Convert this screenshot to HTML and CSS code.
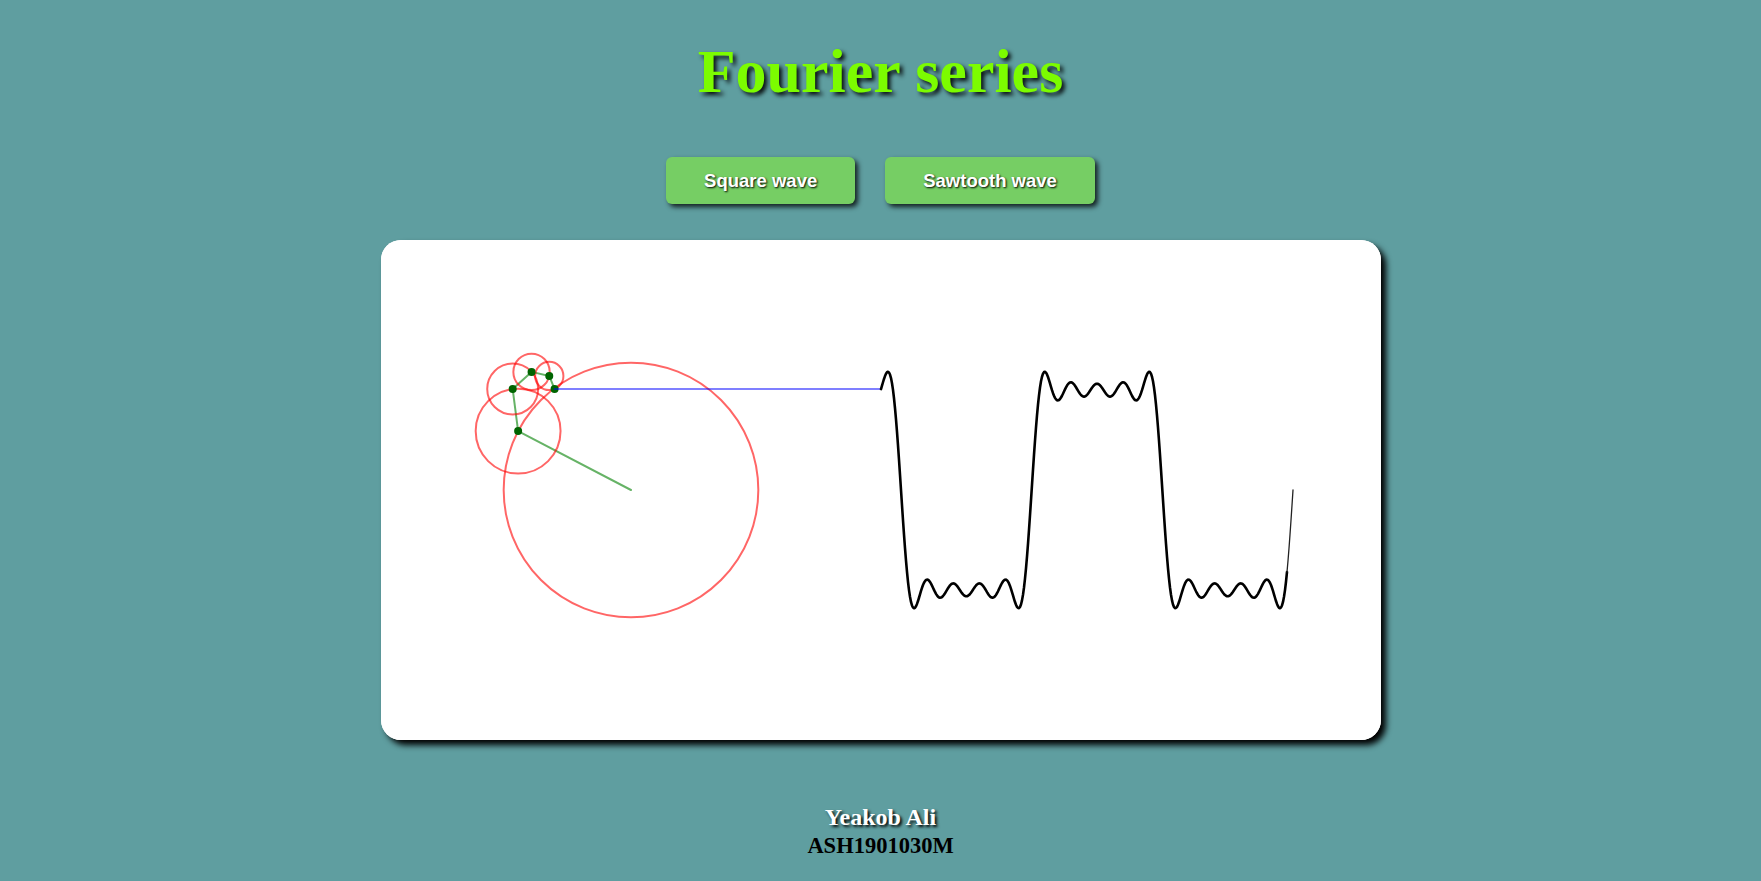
FILE: index.html
```html
<!DOCTYPE html>
<html lang="en">
<head>
<meta charset="utf-8">
<title>Fourier series</title>
<link rel="stylesheet" href="styles.css">
</head>
<body>
<h1 class="title">Fourier series</h1>
<div class="controls">
  <button class="btn">Square wave</button>
  <button class="btn">Sawtooth wave</button>
</div>
<div class="stage">
  <canvas id="fourier" class="board" width="1000" height="500"></canvas>
</div>
<footer class="credits">
  <div class="name">Yeakob Ali</div>
  <div class="id">ASH1901030M</div>
</footer>
<script src="script.js"></script>
</body>
</html>
```

FILE: styles.css
```css
html, body {
  margin: 0;
  padding: 0;
}
body {
  background: #5f9ea0;
  font-family: "Liberation Serif", "Times New Roman", serif;
  text-align: center;
}
.title {
  margin: 36px 0 0;
  font-size: 62px;
  line-height: 71px;
  font-weight: bold;
  color: #7cfc00;
  text-shadow: 3px 3px 4px rgba(0, 0, 0, 0.9);
}
.controls {
  display: flex;
  justify-content: center;
  gap: 30px;
  margin-top: 50px;
}
.btn {
  font-family: "Liberation Sans", Arial, sans-serif;
  font-weight: bold;
  font-size: 18.5px;
  line-height: 21px;
  padding: 13px 38px;
  color: #fff;
  background: #76ce64;
  border: none;
  border-radius: 6px;
  text-shadow: 1px 1px 2px #000;
  box-shadow: 3px 3px 5px rgba(0, 0, 0, 0.8);
  cursor: pointer;
}
.stage {
  display: flex;
  justify-content: center;
  margin-top: 36px;
}
.board {
  display: block;
  width: 1000px;
  height: 500px;
  background: #fff;
  border-radius: 20px;
  box-shadow: 5px 5px 6px #000;
}
.credits {
  margin-top: 63px;
  font-weight: bold;
}
.name {
  font-size: 24px;
  line-height: 28px;
  color: #fff;
  text-shadow: 2px 2px 3px #000;
}
.id {
  margin-top: 2px;
  font-size: 22.5px;
  line-height: 26px;
  color: #000;
}
```

FILE: script.js
```js
(function () {
  var c = document.getElementById('fourier');
  var ctx = c.getContext('2d');
  var dt = 3 * Math.PI / 392;
  var N = 412;
  var t = N * dt;
  var terms = [1, 3, 5, 7, 9];

  ctx.fillStyle = '#fff';
  ctx.fillRect(0, 0, c.width, c.height);
  ctx.save();
  ctx.translate(250, 250);
  ctx.lineCap = 'round';

  var x = 0, y = 0;
  for (var k = 0; k < terms.length; k++) {
    var n = terms[k];
    var r = 100 * 4 / (n * Math.PI);
    var px = x, py = y;
    x += r * Math.cos(n * t);
    y += r * Math.sin(n * t);

    ctx.beginPath();
    ctx.arc(px, py, r, 0, Math.PI * 2);
    ctx.strokeStyle = 'rgba(255,0,0,0.6)';
    ctx.lineWidth = 2;
    ctx.stroke();

    ctx.beginPath();
    ctx.moveTo(px, py);
    ctx.lineTo(x, y);
    ctx.strokeStyle = 'rgba(0,128,0,0.6)';
    ctx.lineWidth = 2;
    ctx.stroke();
  }

  // joint dots
  x = 0; y = 0;
  for (var j = 0; j < terms.length; j++) {
    var m = terms[j];
    var rr = 100 * 4 / (m * Math.PI);
    x += rr * Math.cos(m * t);
    y += rr * Math.sin(m * t);
    ctx.beginPath();
    ctx.arc(x, y, 4, 0, Math.PI * 2);
    ctx.fillStyle = '#006400';
    ctx.fill();
  }

  var wave = [];
  for (var i = 0; i <= N; i++) {
    var s = 0, tt = t - i * dt;
    for (var q = 0; q < terms.length; q++) {
      var nn = terms[q];
      s += 100 * 4 / (nn * Math.PI) * Math.sin(nn * tt);
    }
    wave.push(s);
  }

  var ox = 250;
  ctx.beginPath();
  ctx.moveTo(x, y);
  ctx.lineTo(ox, wave[0]);
  ctx.strokeStyle = 'rgba(0,0,255,0.5)';
  ctx.lineWidth = 2;
  ctx.stroke();

  var thin = 6;
  ctx.beginPath();
  ctx.moveTo(ox, wave[0]);
  for (var w = 1; w <= N - thin; w++) {
    ctx.lineTo(ox + w, wave[w]);
  }
  ctx.strokeStyle = '#000';
  ctx.lineWidth = 2.6;
  ctx.lineJoin = 'round';
  ctx.stroke();

  ctx.beginPath();
  ctx.moveTo(ox + N - thin, wave[N - thin]);
  for (var z = N - thin + 1; z <= N; z++) {
    ctx.lineTo(ox + z, wave[z]);
  }
  ctx.lineWidth = 1.3;
  ctx.strokeStyle = '#222';
  ctx.stroke();
  ctx.restore();
})();
```
